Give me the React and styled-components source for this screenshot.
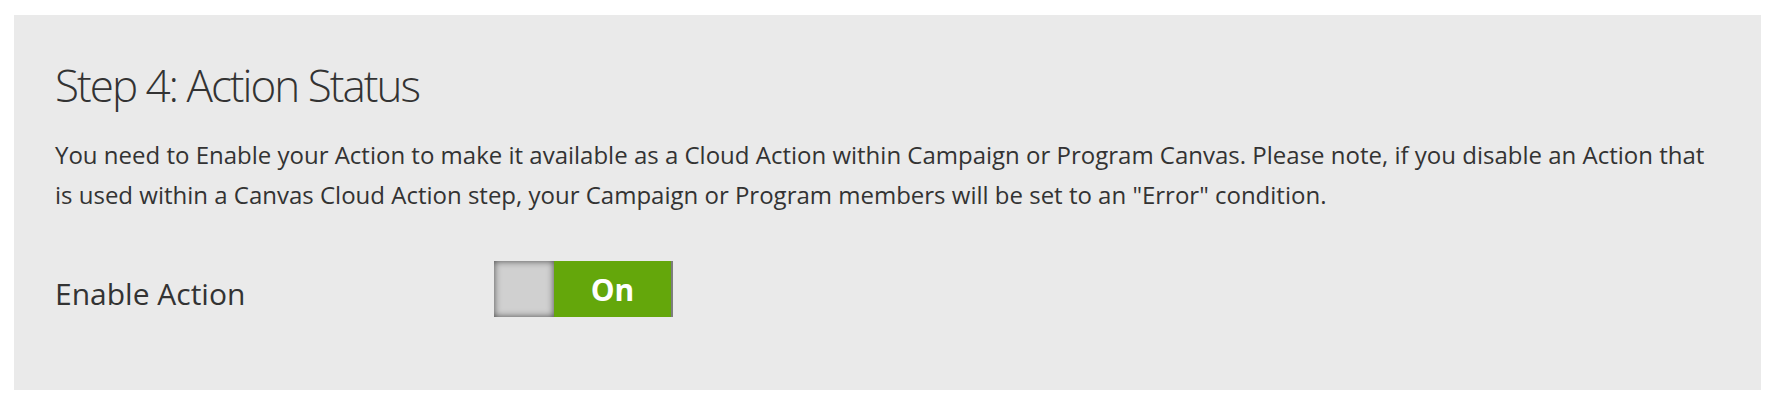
import React, { useState } from "react";
import styled, { createGlobalStyle } from "styled-components";

const GlobalStyle = createGlobalStyle`
  body {
    margin: 0;
    background: #ffffff;
    font-family: "Open Sans", "Liberation Sans", sans-serif;
    color: #333333;
  }
`;

const Page = styled.div`
  padding: 15px 15px 15px 14px;
`;

const Panel = styled.section`
  background: #eaeaea;
  padding: 40px 41px 68px 41px;
`;

const Heading = styled.h2`
  margin: 0;
  font-size: 44px;
  font-weight: 300;
  line-height: 60px;
  letter-spacing: -2px;
  color: #333333;
`;

const Description = styled.p`
  margin: 20px 0 0 0;
  font-size: 24px;
  line-height: 40px;
  color: #333333;
`;

const Row = styled.div`
  display: flex;
  align-items: flex-start;
  margin-top: 46px;
`;

const Label = styled.div`
  width: 439px;
  padding-top: 5px;
  font-size: 30px;
  line-height: 56px;
  color: #333333;
`;

const Toggle = styled.button`
  display: flex;
  width: 179px;
  height: 56px;
  padding: 0;
  border: none;
  border-right: 2px solid #7d7d7d;
  background: ${(p) => (p.on ? "#64a70b" : "#d0d0d0")};
  cursor: pointer;
  font-family: inherit;
`;

const Knob = styled.span`
  width: 60px;
  height: 100%;
  background: #d0d0d0;
  box-shadow: inset 0 0 7px rgba(0, 0, 0, 0.65);
`;

const ToggleText = styled.span`
  flex: 1;
  display: flex;
  align-items: center;
  justify-content: center;
  font-size: 30px;
  font-weight: 700;
  color: #ffffff;
`;

export default function App() {
  const [on, setOn] = useState(true);

  return (
    <Page>
      <GlobalStyle />
      <Panel>
        <Heading>Step 4: Action Status</Heading>
        <Description>
          You need to Enable your Action to make it available as a Cloud Action within Campaign or
          Program Canvas. Please note, if you disable an Action that is used within a Canvas Cloud
          Action step, your Campaign or Program members will be set to an "Error" condition.
        </Description>
        <Row>
          <Label>Enable Action</Label>
          <Toggle on={on ? 1 : 0} onClick={() => setOn(!on)}>
            <Knob />
            <ToggleText>{on ? "On" : "Off"}</ToggleText>
          </Toggle>
        </Row>
      </Panel>
    </Page>
  );
}
